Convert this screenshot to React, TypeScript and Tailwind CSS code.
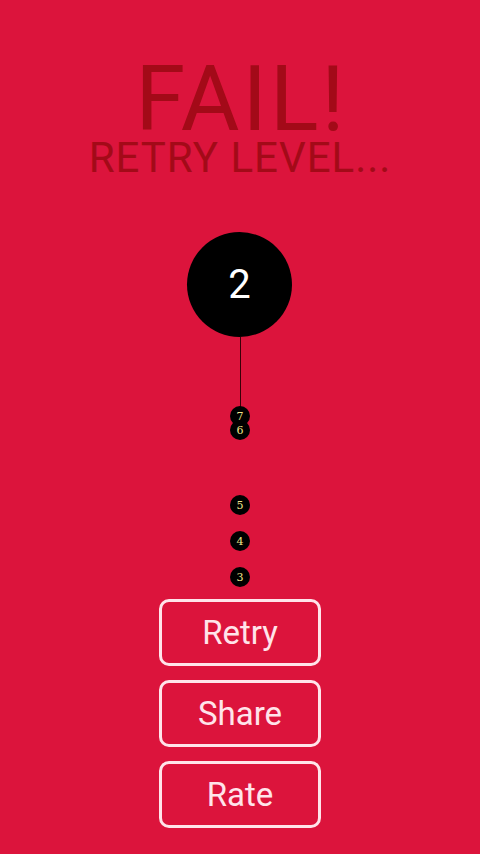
const small = [
  { n: 7, top: 226 },
  { n: 6, top: 240 },
  { n: 5, top: 315 },
  { n: 4, top: 351 },
  { n: 3, top: 387 },
];

export default function App() {
  return (
    <div className="flex h-[854px] w-full flex-col bg-[#dc143c] font-['Roboto','Liberation_Sans',sans-serif]">
      {/* Header */}
      <div className="flex h-[180px] flex-col items-center pt-[62px] text-[#a30a18]">
        <h1 className="text-[90px] font-normal leading-[76px] tracking-[3px] pl-[3px]">FAIL!</h1>
        <p className="mt-[3px] text-[42px] font-normal leading-[34px] tracking-[1px]">RETRY LEVEL...</p>
      </div>

      {/* Game canvas */}
      <div className="relative flex-1">
        <div className="absolute left-[187px] top-[52px] flex h-[105px] w-[105px] items-center justify-center rounded-full bg-black text-[40px] text-white">
          2
        </div>
        <div className="absolute left-[239.5px] top-[157px] h-[70px] w-px bg-[#3a0008]" />
        {small.map(s => (
          <div
            key={s.n}
            className="absolute left-[230px] flex h-5 w-5 items-center justify-center rounded-full bg-black font-['DejaVu_Serif',serif] text-[11px] leading-none text-[#f0e68c]"
            style={{ top: s.top }}
          >
            {s.n}
          </div>
        ))}
      </div>

      {/* Buttons */}
      <div className="flex flex-col items-center gap-[14px] pb-[26px]">
        {['Retry', 'Share', 'Rate'].map(label => (
          <button
            key={label}
            className="flex h-[67px] w-[162px] items-center justify-center rounded-[10px] border-[3px] border-[#ffe4ea] bg-transparent text-[33px] text-[#ffe4ea]"
          >
            {label}
          </button>
        ))}
      </div>
    </div>
  );
}
